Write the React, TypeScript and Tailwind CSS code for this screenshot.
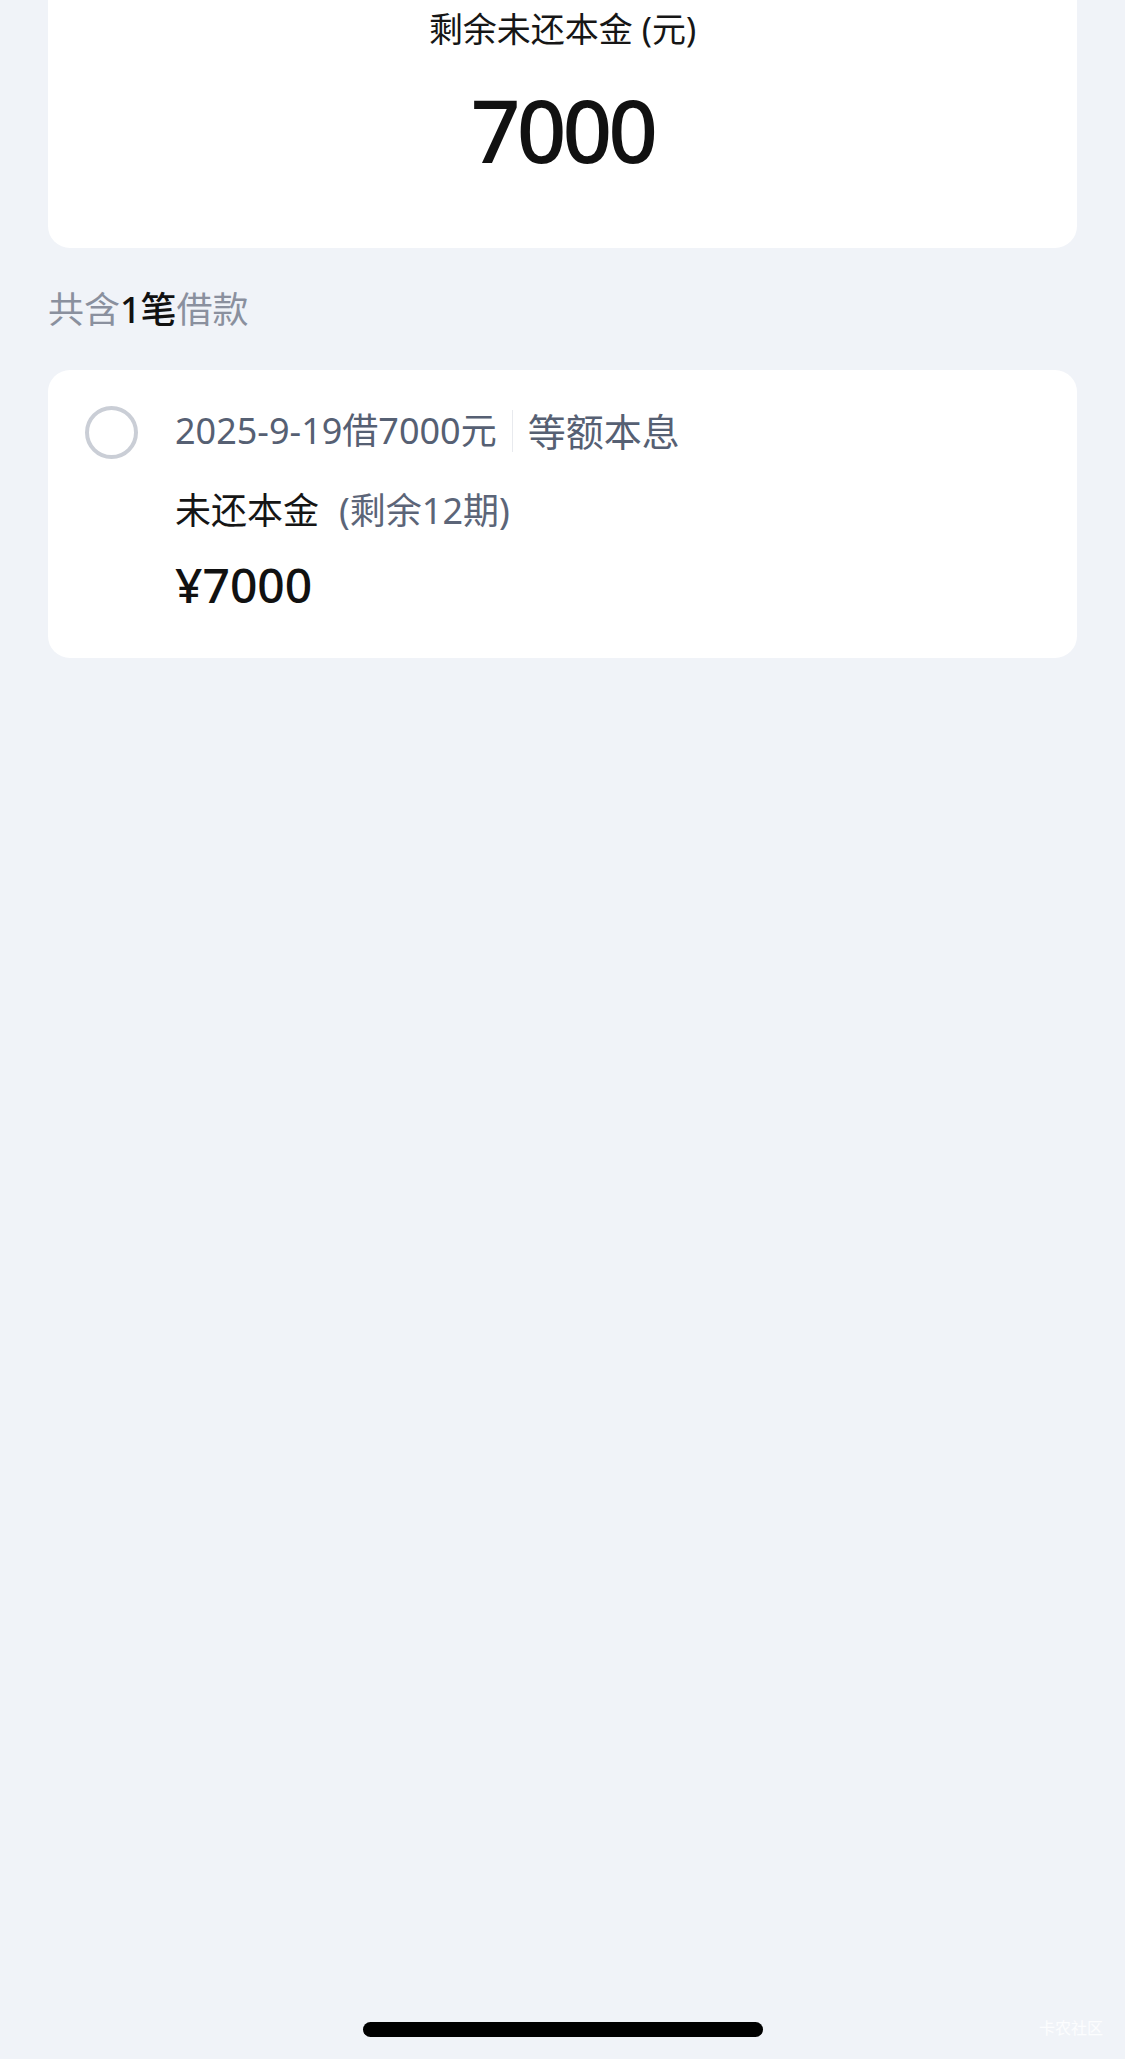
const font = '[font-family:"Noto_Sans","Noto_Sans_CJK_SC",sans-serif]';

export default function App() {
  return (
    <div className={`relative flex min-h-[2059px] w-full flex-col bg-[#f0f3f8] px-[48px] ${font}`}>
      {/* Summary card, its top runs off the screen */}
      <div className="flex h-[248px] flex-col items-center rounded-b-[22px] bg-white">
        <p className="mt-[9px] text-[34px] leading-[40px] text-[#161616]">剩余未还本金 (元)</p>
        <p className="mt-[36px] text-[87px] leading-[88px] font-medium tracking-[-0.045em] text-[#111111]">7000</p>
      </div>

      <p className="mt-[44px] text-[36px] leading-[36px] text-[#8a909e]">
        共含<span className="font-medium text-[#111111]">1笔</span>借款
      </p>

      {/* Loan item */}
      <div className="mt-[42px] flex h-[288px] items-start rounded-[22px] bg-white pl-[37px]">
        <span className="mt-[36px] block h-[53px] w-[53px] shrink-0 rounded-full border-[4px] border-[#caced6]" />
        <div className="ml-[37px] flex flex-col pt-[39px]">
          <div className="flex items-center text-[36px] leading-[44px] text-[#566073]">
            <span>2025-9-19借7000元</span>
            <span className="mx-[15px] h-[42px] w-px bg-[#e8eaee]" />
            <span className="text-[38px]">等额本息</span>
          </div>
          <p className="mt-[36px] flex text-[36px] leading-[44px] text-[#151515]">
            <span>未还本金</span>
            <span className="ml-[20px] text-[#5c6578]">(剩余12期)</span>
          </p>
          <p className="mt-[24px] text-[48px] leading-[56px] font-medium text-[#111111]">¥7000</p>
        </div>
      </div>

      <div className="flex-1" />

      {/* Home indicator */}
      <div className="mx-auto mb-[22px] h-[15px] w-[400px] rounded-full bg-black" />

      <span className="absolute right-[22px] bottom-[22px] text-[16px] leading-[18px] text-white/80">卡农社区</span>
    </div>
  );
}
